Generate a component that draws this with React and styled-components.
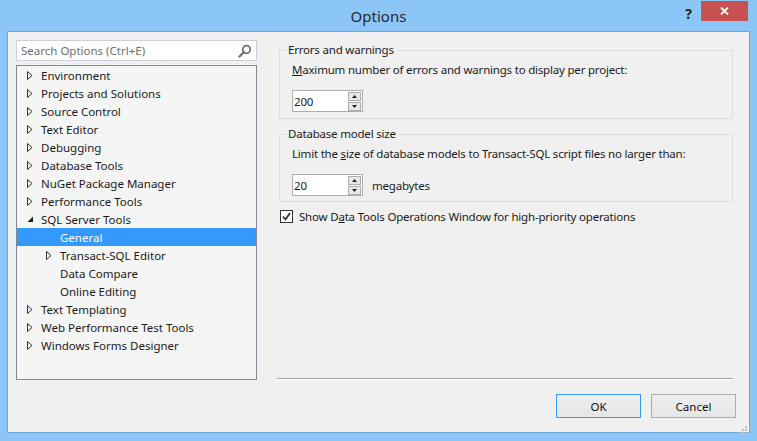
import React from "react"
import styled, { createGlobalStyle } from "styled-components"

const Global = createGlobalStyle`
  html, body { margin: 0; padding: 0; background: #8bc6f7; }
  * { box-sizing: border-box; }
`

const Window = styled.div`
  width: 757px;
  height: 441px;
  background: #8bc6f7;
  display: flex;
  flex-direction: column;
  padding: 0 7px 8px 7px;
  font-family: "Noto Sans", "Open Sans", sans-serif;
  font-size: 11.5px;
  color: #1b1b1b;
`

const TitleBar = styled.div`
  height: 31px;
  position: relative;
  display: flex;
  align-items: center;
  justify-content: center;
`

const TitleText = styled.div`
  font-size: 15px;
  color: #2a2a2a;
`

const Help = styled.div`
  position: absolute;
  right: 58px;
  top: 4px;
  font-size: 14px;
  font-weight: bold;
  color: #222;
`

const CloseBtn = styled.div`
  position: absolute;
  right: 2px;
  top: 1px;
  width: 47px;
  height: 20px;
  background: #c75050;
  display: flex;
  align-items: center;
  justify-content: center;
`

const Client = styled.div`
  flex: 1;
  background: #f0f0f0;
  border: 1px solid #6ea7dd;
  display: flex;
  flex-direction: column;
  padding: 8px 13px 0 8px;
  position: relative;
`

const Main = styled.div`
  display: flex;
  gap: 20px;
  height: 340px;
`

const Left = styled.div`
  width: 241px;
  display: flex;
  flex-direction: column;
  gap: 4px;
`

const Search = styled.div`
  height: 21px;
  background: #fff;
  border: 1px solid #cccedb;
  display: flex;
  align-items: center;
  padding: 0 4px 0 4px;
  color: #6d6d6d;
`

const SearchText = styled.span`
  flex: 1;
`

const Tree = styled.div`
  height: 315px;
  background: #f5f5f5;
  border: 1px solid #828790;
`

const Row = styled.div`
  height: 18px;
  display: flex;
  align-items: center;
  padding-left: ${p => 10 + p.$level * 19}px;
  background: ${p => (p.$selected ? "#3399ff" : "transparent")};
  color: ${p => (p.$selected ? "#fff" : "#1b1b1b")};
  white-space: nowrap;
`

const Arrow = styled.span`
  width: 14px;
  display: inline-flex;
  align-items: center;
`

const Right = styled.div`
  flex: 1;
  display: flex;
  flex-direction: column;
  margin: 3px 3px 0 0;
  letter-spacing: -0.2px;
`

const Group = styled.fieldset`
  margin: 0 0 0 2px;
  border: 1px solid #dcdcdc;
  padding: 2px 8px 5px 12px;
  height: ${p => p.$h}px;
  margin-bottom: ${p => p.$mb || 0}px;
`

const Legend = styled.legend`
  padding: 0 3px 0 2px;
  margin-left: -6px;
  line-height: 14px;
`

const Label = styled.div`
  line-height: 16px;
  margin: 3px 0 12px 0;
`

const SpinRow = styled.div`
  display: flex;
  align-items: center;
  gap: 9px;
`

const Spin = styled.div`
  width: 71px;
  height: 22px;
  background: #fff;
  border: 1px solid #abadb3;
  display: flex;
  align-items: center;
  padding: 0 1px;
`

const SpinValue = styled.span`
  flex: 1;
`

const SpinButtons = styled.div`
  display: flex;
  flex-direction: column;
  gap: 1px;
`

const SpinBtn = styled.div`
  width: 13px;
  height: 9px;
  background: #e8e8e8;
  border: 1px solid #acacac;
  display: flex;
  align-items: center;
  justify-content: center;
`

const Check = styled.label`
  display: flex;
  align-items: center;
  gap: 6px;
  margin: 7px 0 0 3px;
`

const CheckBox = styled.span`
  width: 13px;
  height: 13px;
  border: 1px solid #333;
  background: #fff;
  display: inline-flex;
  align-items: center;
  justify-content: center;
`

const Spacer = styled.div`
  flex: 1;
`

const Separator = styled.div`
  height: 1px;
  background: #a0a0a0;
  border-bottom: 1px solid #fff;
  box-sizing: content-box;
`

const Footer = styled.div`
  display: flex;
  justify-content: flex-end;
  gap: 10px;
  margin-top: 14px;
`

const Button = styled.div`
  width: 85px;
  height: 24px;
  border: 1px solid ${p => (p.$default ? "#3399ff" : "#adadad")};
  background: linear-gradient(#efefef, #e5e5e5);
  display: flex;
  align-items: center;
  justify-content: center;
  color: #111;
`

const Grip = styled.div`
  position: absolute;
  right: 2px;
  bottom: 2px;
  width: 8px;
  height: 8px;
`

const Tri = ({ open }) =>
  open ? (
    <svg width="7" height="7" viewBox="0 0 7 7">
      <path d="M6 0.5 L6 6 L0.5 6 Z" fill="#1e1e1e" />
    </svg>
  ) : (
    <svg width="6" height="9" viewBox="0 0 6 9">
      <path d="M0.5 0.5 L5 4.5 L0.5 8.5 Z" fill="none" stroke="#333" strokeWidth="1" />
    </svg>
  )

const Magnifier = () => (
  <svg width="14" height="14" viewBox="0 0 14 14">
    <circle cx="8.5" cy="5.5" r="3.8" fill="none" stroke="#717171" strokeWidth="1.8" />
    <path d="M5.8 8.2 L1.5 12.5" stroke="#717171" strokeWidth="2.4" strokeLinecap="round" />
  </svg>
)

const items = [
  { label: "Environment", level: 0, arrow: "closed" },
  { label: "Projects and Solutions", level: 0, arrow: "closed" },
  { label: "Source Control", level: 0, arrow: "closed" },
  { label: "Text Editor", level: 0, arrow: "closed" },
  { label: "Debugging", level: 0, arrow: "closed" },
  { label: "Database Tools", level: 0, arrow: "closed" },
  { label: "NuGet Package Manager", level: 0, arrow: "closed" },
  { label: "Performance Tools", level: 0, arrow: "closed" },
  { label: "SQL Server Tools", level: 0, arrow: "open" },
  { label: "General", level: 1, selected: true },
  { label: "Transact-SQL Editor", level: 1, arrow: "closed" },
  { label: "Data Compare", level: 1 },
  { label: "Online Editing", level: 1 },
  { label: "Text Templating", level: 0, arrow: "closed" },
  { label: "Web Performance Test Tools", level: 0, arrow: "closed" },
  { label: "Windows Forms Designer", level: 0, arrow: "closed" },
]

const SpinArrows = () => (
  <SpinButtons>
    <SpinBtn>
      <svg width="5" height="3" viewBox="0 0 5 3"><path d="M0 3 L2.5 0 L5 3 Z" fill="#222" /></svg>
    </SpinBtn>
    <SpinBtn>
      <svg width="5" height="3" viewBox="0 0 5 3"><path d="M0 0 L2.5 3 L5 0 Z" fill="#222" /></svg>
    </SpinBtn>
  </SpinButtons>
)

export default function App() {
  return (
    <Window>
      <Global />
      <TitleBar>
        <TitleText>Options</TitleText>
        <Help>?</Help>
        <CloseBtn>
          <svg width="9" height="8" viewBox="0 0 9 8">
            <path d="M1 0.5 L8 7.5 M8 0.5 L1 7.5" stroke="#fff" strokeWidth="1.8" />
          </svg>
        </CloseBtn>
      </TitleBar>
      <Client>
        <Main>
          <Left>
            <Search>
              <SearchText>Search Options (Ctrl+E)</SearchText>
              <Magnifier />
            </Search>
            <Tree>
              {items.map(it => (
                <Row key={it.label} $level={it.level} $selected={it.selected}>
                  <Arrow>{it.arrow && <Tri open={it.arrow === "open"} />}</Arrow>
                  {it.label}
                </Row>
              ))}
            </Tree>
          </Left>
          <Right>
            <Group $h={76} $mb={8}>
              <Legend>Errors and warnings</Legend>
              <Label>
                <u>M</u>aximum number of errors and warnings to display per project:
              </Label>
              <SpinRow>
                <Spin>
                  <SpinValue>200</SpinValue>
                  <SpinArrows />
                </Spin>
              </SpinRow>
            </Group>
            <Group $h={75}>
              <Legend>Database model size</Legend>
              <Label>
                Limit the <u>s</u>ize of database models to Transact-SQL script files no larger than:
              </Label>
              <SpinRow>
                <Spin>
                  <SpinValue>20</SpinValue>
                  <SpinArrows />
                </Spin>
                <span>megabytes</span>
              </SpinRow>
            </Group>
            <Check>
              <CheckBox>
                <svg width="9" height="9" viewBox="0 0 9 9">
                  <path d="M1 4.5 L3.5 7.5 L8 1" fill="none" stroke="#222" strokeWidth="1.6" />
                </svg>
              </CheckBox>
              <span>
                Show D<u>a</u>ta Tools Operations Window for high-priority operations
              </span>
            </Check>
            <Spacer />
            <Separator />
          </Right>
        </Main>
        <Footer>
          <Button $default>OK</Button>
          <Button>Cancel</Button>
        </Footer>
        <Grip>
          <svg width="8" height="8" viewBox="0 0 8 8" fill="#bcbcbc">
            <rect x="6" y="0" width="2" height="2" />
            <rect x="3" y="3" width="2" height="2" />
            <rect x="6" y="3" width="2" height="2" />
            <rect x="0" y="6" width="2" height="2" />
            <rect x="3" y="6" width="2" height="2" />
            <rect x="6" y="6" width="2" height="2" />
          </svg>
        </Grip>
      </Client>
    </Window>
  )
}
